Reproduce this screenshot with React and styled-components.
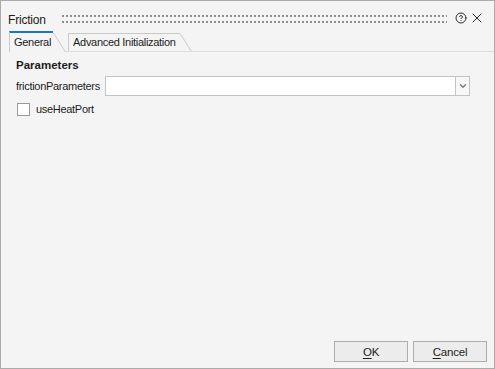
import styled, { createGlobalStyle } from "styled-components";
import { CircleHelp, X, ChevronDown } from "lucide-react";

const GlobalStyle = createGlobalStyle`
  html, body {
    margin: 0;
    padding: 0;
    background: #f4f4f4;
  }
  * {
    box-sizing: border-box;
  }
`;

const Window = styled.div`
  width: 495px;
  height: 369px;
  border: 1px solid #ababab;
  background: #f4f4f4;
  display: flex;
  flex-direction: column;
  font-family: "Liberation Sans", Arial, sans-serif;
  color: #1c1c1c;
`;

const TitleBar = styled.div`
  height: 30px;
  padding: 6px 9px 0 7px;
  display: flex;
  align-items: center;
`;

const Title = styled.span`
  font-size: 12px;
  line-height: 16px;
  letter-spacing: -0.2px;
  margin-top: 2px;
`;

// dotted drag grip, 2x2 dots on a 4x6 grid
const Grip = styled.div`
  flex: 1;
  height: 8px;
  margin: 0 8px 0 16px;
  background-image: linear-gradient(to right, #8e8e8e 2px, transparent 2px),
    linear-gradient(to bottom, transparent 2px, #f4f4f4 2px);
  background-size: 4px 6px, 4px 6px;
  background-blend-mode: normal;
  -webkit-mask-image: linear-gradient(to bottom, #000 2px, transparent 2px);
  -webkit-mask-size: 4px 6px;
  mask-image: linear-gradient(to bottom, #000 2px, transparent 2px);
  mask-size: 4px 6px;
`;

const IconButton = styled.span`
  display: flex;
  align-items: center;
  justify-content: center;
  color: #2b2b2b;
  margin-bottom: 3px;
  margin-left: ${(p) => p.$gap || 0}px;
`;

const TabStrip = styled.div`
  display: flex;
  align-items: flex-end;
  height: 21px;
  margin-left: 8px;
  border-bottom: 1px solid #dcdcdc;
`;

const Tab = styled.div`
  position: relative;
  font-size: 11px;
  letter-spacing: -0.3px;
  padding: ${(p) => (p.$active ? "0 2px 1px 4px" : "0 4px 0 4px")};
  line-height: ${(p) => (p.$active ? "18px" : "17px")};
  margin-bottom: ${(p) => (p.$active ? "-1px" : "0")};
  margin-right: ${(p) => (p.$active ? "15px" : "0")};
  border-left: 1px solid #c9c9c9;
  border-top: ${(p) => (p.$active ? "2px solid #1a78b8" : "1px solid #c9c9c9")};
  background: #f4f4f4;
  z-index: ${(p) => (p.$active ? 2 : 1)};

  /* slanted right edge of the tab */
  &::after {
    content: "";
    position: absolute;
    z-index: -1;
    top: 0;
    bottom: 0;
    left: calc(100% - 13px);
    width: 13px;
    border-right: 1px solid #c9c9c9;
    background: #f4f4f4;
    transform: skewX(32deg);
    transform-origin: top left;
  }
`;

const Content = styled.div`
  flex: 1;
  padding: 6px 24px 0 15px;
  display: flex;
  flex-direction: column;
`;

const SectionTitle = styled.div`
  font-size: 11.5px;
  font-weight: bold;
  line-height: 14px;
`;

const FieldRow = styled.div`
  display: flex;
  align-items: center;
  margin-top: 4px;
`;

const Label = styled.span`
  font-size: 11px;
  letter-spacing: -0.3px;
  line-height: 14px;
  margin-right: 5px;
`;

const Combo = styled.div`
  flex: 1;
  display: flex;
  height: 20px;
`;

const ComboInput = styled.div`
  flex: 1;
  background: #ffffff;
  border: 1px solid #c3c3c3;
  border-right: none;
`;

const ComboButton = styled.div`
  width: 15px;
  border: 1px solid #c3c3c3;
  background: #f7f7f7;
  display: flex;
  align-items: center;
  justify-content: center;
  color: #7f7f7f;
`;

const CheckRow = styled.label`
  display: flex;
  align-items: center;
  margin-top: 6px;
  margin-left: 1px;
`;

const CheckBox = styled.span`
  width: 13px;
  height: 13px;
  border: 1px solid #9a9a9a;
  background: #ffffff;
  margin-right: 6px;
`;

const Footer = styled.div`
  display: flex;
  justify-content: flex-end;
  gap: 5px;
  padding: 0 7px 6px 0;
`;

const Button = styled.button`
  width: 74px;
  height: 21px;
  padding: 0;
  border: 1px solid #adadad;
  background: #ececec;
  font-family: "Liberation Sans", Arial, sans-serif;
  font-size: 11.5px;
  letter-spacing: -0.2px;
  color: #1c1c1c;

  u {
    text-decoration-thickness: 1px;
    text-underline-offset: 2px;
  }
`;

export default function App() {
  return (
    <>
      <GlobalStyle />
      <Window>
        <TitleBar>
          <Title>Friction</Title>
          <Grip />
          <IconButton>
            <CircleHelp size={12} strokeWidth={2} />
          </IconButton>
          <IconButton $gap={2}>
            <X size={16} strokeWidth={1.5} />
          </IconButton>
        </TitleBar>
        <TabStrip>
          <Tab $active>General</Tab>
          <Tab>Advanced Initialization</Tab>
        </TabStrip>
        <Content>
          <SectionTitle>Parameters</SectionTitle>
          <FieldRow>
            <Label>frictionParameters</Label>
            <Combo>
              <ComboInput />
              <ComboButton>
                <ChevronDown size={10} strokeWidth={3.5} />
              </ComboButton>
            </Combo>
          </FieldRow>
          <CheckRow>
            <CheckBox />
            <Label>useHeatPort</Label>
          </CheckRow>
        </Content>
        <Footer>
          <Button>
            <u>O</u>K
          </Button>
          <Button>
            <u>C</u>ancel
          </Button>
        </Footer>
      </Window>
    </>
  );
}
